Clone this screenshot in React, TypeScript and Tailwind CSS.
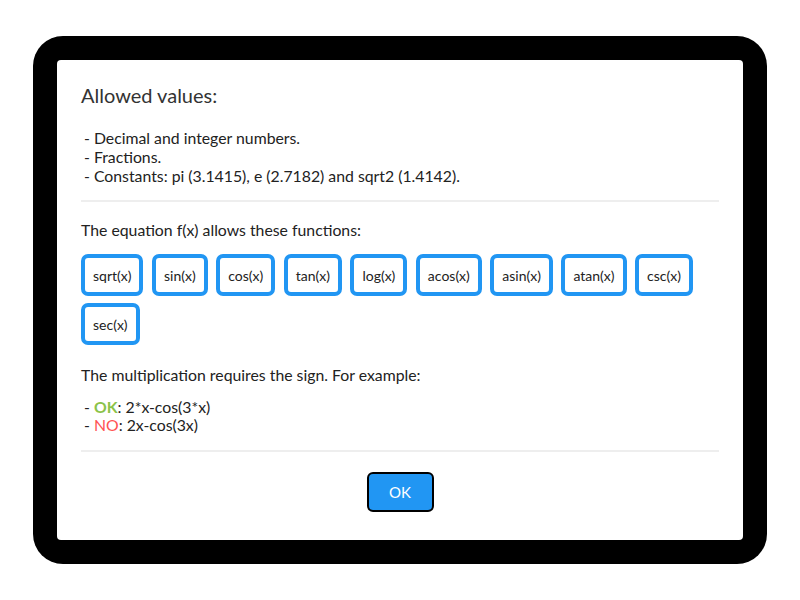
import React from 'react';

const FUNCTIONS = ['sqrt(x)', 'sin(x)', 'cos(x)', 'tan(x)', 'log(x)', 'acos(x)', 'asin(x)', 'atan(x)', 'csc(x)', 'sec(x)'];

export default function App() {
  return (
    <div className="w-[800px] h-[600px] bg-white pt-[36px] pl-[33px]" style={{ fontFamily: 'Lato, "Open Sans", sans-serif' }}>
      <div className="w-[734px] h-[528px] bg-black rounded-[30px] p-[24px]">
        <div className="w-full h-full bg-white rounded-[4px] px-[24px] pt-[23px] text-[#222]">
          <h2 className="text-[20px] leading-[24px] text-[#333]">Allowed values:</h2>

          <div className="mt-[21px] text-[15.8px] leading-[19px] pl-[3px]">
            <div>- Decimal and integer numbers.</div>
            <div>- Fractions.</div>
            <div>- Constants: pi (3.1415), e (2.7182) and sqrt2 (1.4142).</div>
          </div>

          <div className="mt-[15px] h-[2px] bg-[#eeeeee]" />

          <p className="mt-[18px] text-[15.8px] leading-[19px]">The equation f(x) allows these functions:</p>

          {/* function chips */}
          <div className="mt-[15px] flex flex-wrap gap-x-[8.5px] gap-y-[7px]">
            {FUNCTIONS.map((fn) => (
              <div
                key={fn}
                className="h-[42px] px-[8px] flex items-center border-[4px] border-[#2196f3] rounded-[7px] text-[14px] text-[#222]"
              >
                {fn}
              </div>
            ))}
          </div>

          <p className="mt-[20px] text-[15.8px] leading-[19px]">The multiplication requires the sign. For example:</p>

          <div className="mt-[14px] text-[15.8px] leading-[18px] pl-[3px]">
            <div>
              - <span className="font-bold text-[#8bc34a]">OK</span>: 2*x-cos(3*x)
            </div>
            <div>
              - <span className="text-[#ff5252]">NO</span>: 2x-cos(3x)
            </div>
          </div>

          <div className="mt-[16px] h-[2px] bg-[#eeeeee]" />

          <div className="mt-[20px] flex justify-center">
            <button className="w-[67px] h-[40px] bg-[#2196f3] text-white text-[15px] border-2 border-black rounded-[6px]">
              OK
            </button>
          </div>
        </div>
      </div>
    </div>
  );
}
